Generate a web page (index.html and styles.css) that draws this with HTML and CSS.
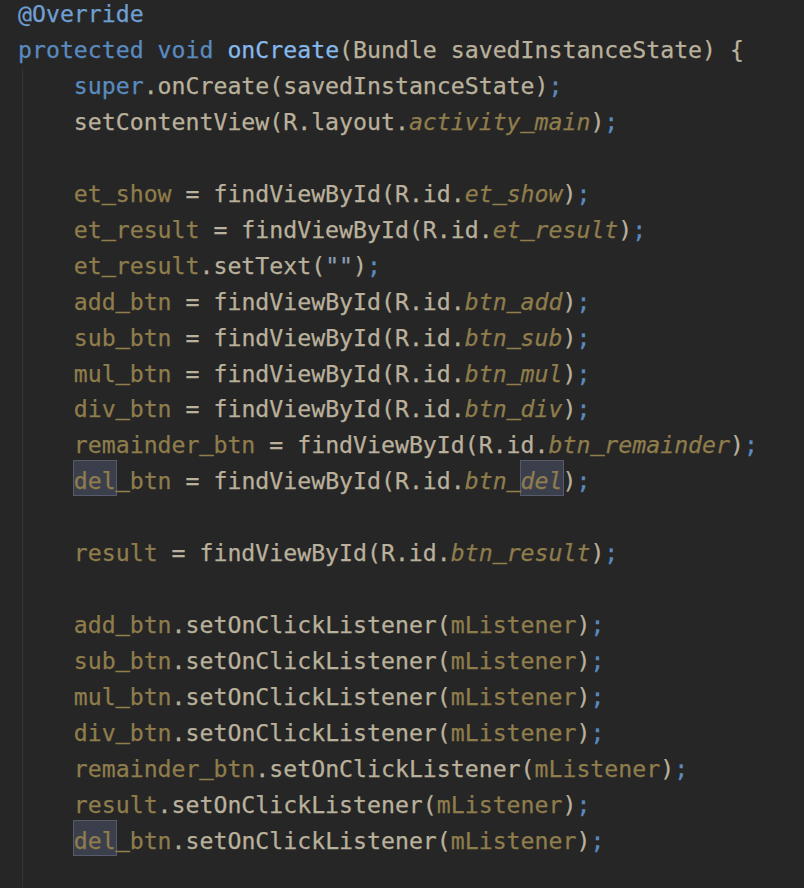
FILE: index.html
```html
<!DOCTYPE html>
<html>
<head>
<meta charset="utf-8">
<link rel="stylesheet" href="styles.css">
</head>
<body>
<div class="editor">
<div class="line"><span class="ann">@Override</span></div>
<div class="line"><span class="kw">protected void </span><span class="fn">onCreate</span>(Bundle savedInstanceState) {</div>
<div class="body">
<div class="line"><span class="kw">super</span>.onCreate(savedInstanceState)<span class="kw">;</span></div>
<div class="line">setContentView(R.layout.<span class="st">activity<span class="u">_</span>main</span>)<span class="kw">;</span></div>
<div class="line"> </div>
<div class="line"><span class="fd">et<span class="u">_</span>show</span> = findViewById(R.id.<span class="st">et<span class="u">_</span>show</span>)<span class="kw">;</span></div>
<div class="line"><span class="fd">et<span class="u">_</span>result</span> = findViewById(R.id.<span class="st">et<span class="u">_</span>result</span>)<span class="kw">;</span></div>
<div class="line"><span class="fd">et<span class="u">_</span>result</span>.setText(<span class="str">""</span>)<span class="kw">;</span></div>
<div class="line"><span class="fd">add<span class="u">_</span>btn</span> = findViewById(R.id.<span class="st">btn<span class="u">_</span>add</span>)<span class="kw">;</span></div>
<div class="line"><span class="fd">sub<span class="u">_</span>btn</span> = findViewById(R.id.<span class="st">btn<span class="u">_</span>sub</span>)<span class="kw">;</span></div>
<div class="line"><span class="fd">mul<span class="u">_</span>btn</span> = findViewById(R.id.<span class="st">btn<span class="u">_</span>mul</span>)<span class="kw">;</span></div>
<div class="line"><span class="fd">div<span class="u">_</span>btn</span> = findViewById(R.id.<span class="st">btn<span class="u">_</span>div</span>)<span class="kw">;</span></div>
<div class="line"><span class="fd">remainder<span class="u">_</span>btn</span> = findViewById(R.id.<span class="st">btn<span class="u">_</span>remainder</span>)<span class="kw">;</span></div>
<div class="line"><span class="fd"><span class="hl">del</span><span class="u">_</span>btn</span> = findViewById(R.id.<span class="st">btn<span class="u">_</span><span class="hl">del</span></span>)<span class="kw">;</span></div>
<div class="line"> </div>
<div class="line"><span class="fd">result</span> = findViewById(R.id.<span class="st">btn<span class="u">_</span>result</span>)<span class="kw">;</span></div>
<div class="line"> </div>
<div class="line"><span class="fd">add<span class="u">_</span>btn</span>.setOnClickListener(<span class="fd">mListener</span>)<span class="kw">;</span></div>
<div class="line"><span class="fd">sub<span class="u">_</span>btn</span>.setOnClickListener(<span class="fd">mListener</span>)<span class="kw">;</span></div>
<div class="line"><span class="fd">mul<span class="u">_</span>btn</span>.setOnClickListener(<span class="fd">mListener</span>)<span class="kw">;</span></div>
<div class="line"><span class="fd">div<span class="u">_</span>btn</span>.setOnClickListener(<span class="fd">mListener</span>)<span class="kw">;</span></div>
<div class="line"><span class="fd">remainder<span class="u">_</span>btn</span>.setOnClickListener(<span class="fd">mListener</span>)<span class="kw">;</span></div>
<div class="line"><span class="fd">result</span>.setOnClickListener(<span class="fd">mListener</span>)<span class="kw">;</span></div>
<div class="line"><span class="fd"><span class="hl">del</span><span class="u">_</span>btn</span>.setOnClickListener(<span class="fd">mListener</span>)<span class="kw">;</span></div>
</div>
</div>
</body>
</html>
```

FILE: styles.css
```css
html, body {
  margin: 0;
  padding: 0;
  background: #262626;
  overflow: hidden;
  height: 888px;
}
.editor {
  font-family: "DejaVu Sans Mono", monospace;
  font-size: 23.2px;
  line-height: 35.96px;
  color: #bab19c;
  padding-left: 18px;
  margin-top: -4px;
  -webkit-text-stroke: 0.25px currentColor;
}
.line {
  white-space: pre;
  height: 35.96px;
}
.body {
  margin-left: 4px;
  border-left: 1px solid #343434;
  padding-left: calc(4ch - 5px);
  padding-bottom: 28px;
}
.u {
  position: relative;
  top: -3px;
  -webkit-text-stroke: 0.8px currentColor;
}
.ann { color: #6f9fd3; }
.kw { color: #5a8bbf; }
.fn { color: #86b9ec; }
.fd { color: #8f7d4c; }
.st { color: #8f7d4c; font-style: italic; }
.str { color: #8b9cb3; }
.hl {
  background: #3b3f4c;
  outline: 1px solid #565b6c;
  padding-top: 6px;
  padding-bottom: 1px;
}
```
